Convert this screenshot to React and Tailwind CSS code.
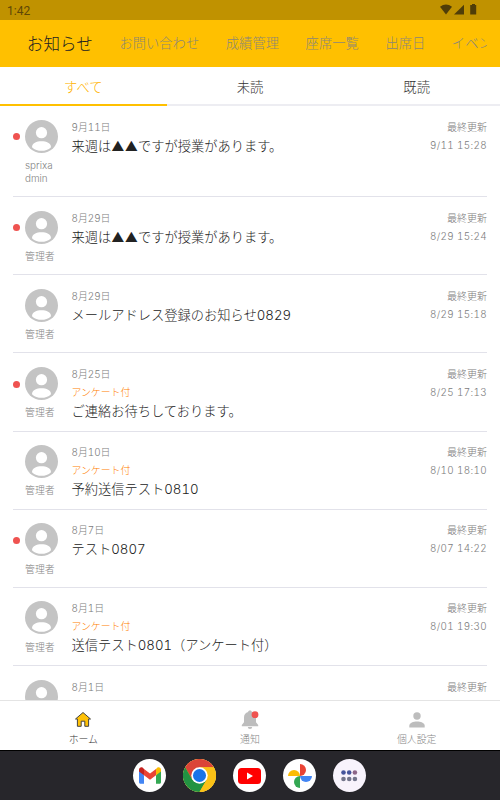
import clsx from 'clsx'

const categories = ['お問い合わせ', '成績管理', '座席一覧', '出席日', 'イベント']

const notices = [
  { id: 1, date: '9月11日', title: '来週は▲▲ですが授業があります。', name: 'sprixadmin', updated: '9/11 15:28', unread: true },
  { id: 2, date: '8月29日', title: '来週は▲▲ですが授業があります。', name: '管理者', updated: '8/29 15:24', unread: true },
  { id: 3, date: '8月29日', title: 'メールアドレス登録のお知らせ0829', name: '管理者', updated: '8/29 15:18' },
  { id: 4, date: '8月25日', title: 'ご連絡お待ちしております。', name: '管理者', updated: '8/25 17:13', unread: true, survey: true },
  { id: 5, date: '8月10日', title: '予約送信テスト0810', name: '管理者', updated: '8/10 18:10', survey: true },
  { id: 6, date: '8月7日', title: 'テスト0807', name: '管理者', updated: '8/07 14:22', unread: true },
  { id: 7, date: '8月1日', title: '送信テスト0801（アンケート付）', name: '管理者', updated: '8/01 19:30', survey: true },
  { id: 8, date: '8月1日', survey: true },
]

function Avatar() {
  return (
    <svg viewBox="0 0 33 33" className="block size-[33px]">
      <circle cx="16.5" cy="16.5" r="16.5" fill="#c4c4c4" />
      <circle cx="16.5" cy="12.7" r="5.6" fill="#fff" />
      <path d="M7 27.2c0-4.2 4.6-6 9.5-6s9.5 1.8 9.5 6c-2.6 2.6-6 3.6-9.5 3.6S9.6 29.8 7 27.2z" fill="#fff" />
    </svg>
  )
}

function Notice({ item }) {
  return (
    <li className="flex min-h-[78.15px] border-b border-[#e2e2ea] pt-[13.6px] pb-[11.5px]">
      <div className="flex w-3 shrink-0 pt-[13.5px]">
        {item.unread && <span className="size-[7px] rounded-full bg-[#ef5350]" />}
      </div>
      <div className="w-[33px] shrink-0">
        <Avatar />
        <div className="mt-[6.2px] w-[31px] text-[9.9px] leading-[12.8px] break-all text-[#858585]">{item.name}</div>
      </div>
      <div className="ml-[13.5px] min-w-0 flex-1">
        <div className="h-[17px] text-[9.9px] leading-[15px] text-[#7c7c7c]">{item.date}</div>
        {item.survey && <div className="h-[17.5px] text-[9.9px] leading-[17px] text-[#ff8000]">アンケート付</div>}
        <div className="h-[17px] text-[13.25px] leading-[19px] whitespace-nowrap text-[#222]">{item.title}</div>
      </div>
      <div className="text-right text-[9.9px] text-[#7c7c7c]">
        <div className="h-[17px] text-[10px] leading-[15px]">最終更新</div>
        <div className="h-[17px] leading-[16px] tracking-[0.035em]">{item.updated}</div>
      </div>
    </li>
  )
}

function StatusIcons() {
  return (
    <svg viewBox="0 0 40 12" className="h-3 w-10" fill="#4f3d08">
      <path d="M0 2.8Q6-1.6 12 2.8L6 10.6z" />
      <path d="M24 .8V10.6H14z" />
      <path d="M32 .9v-1h3v1h1.2V10.6H30.2V.9z" />
    </svg>
  )
}

function HomeIcon() {
  return (
    <svg viewBox="0 0 18 17" className="h-[17px] w-[18px]">
      <path d="M9 1.5L1.5 8h1.9v7.300h3.8v-5.1h3.6v5.1h3.8V8h1.9z" fill="#ffc107" stroke="#444" strokeWidth="1" strokeLinejoin="round" />
    </svg>
  )
}

function BellIcon() {
  return (
    <svg viewBox="0 0 18 20" className="h-5 w-[18px]" fill="#bdbdbd">
      <path d="M9 .6c-1.200 0-1.900.7-1.900 1.500C4.400 2.800 3 4.800 3 7.600v4.600L.8 14.900v1.300h16.400v-1.300L15 12.200V7.600c0-2.800-1.400-4.800-4.100-5.500C10.900 1.300 10.200.6 9 .6zM6.800 16.900a2.200 2 0 0 0 4.400 0z" />
      <circle cx="14" cy="4.7" r="3.4" fill="#ef5350" />
    </svg>
  )
}

function PersonIcon() {
  return (
    <svg viewBox="0 0 16 16" className="size-4" fill="#bdbdbd">
      <circle cx="8" cy="4" r="3.7" />
      <path d="M.3 15.500v-1.700C.3 11 4.500 9.600 8 9.600s7.700 1.400 7.700 4.200v1.700z" />
    </svg>
  )
}

function GmailIcon() {
  return (
    <svg viewBox="0 0 22 17" className="h-[17px] w-[22px]">
      <path d="M0 3v12.300c0 .9.700 1.500 1.500 1.500H5V8.300L2 4z" fill="#4285f4" />
      <path d="M22 3v12.300c0 .9-.7 1.500-1.500 1.500H17V8.300L20 4z" fill="#34a853" />
      <path d="M17 2v6.300l5-3.800V2.600c0-2-2.200-3.100-3.800-1.900z" fill="#fbbc04" />
      <path d="M5 8.300V2l6 4.500L17 2v6.300l-6 4.500z" fill="#ea4335" />
      <path d="M0 2.600v1.900l5 3.800V2L3.800.7C2.200-.5 0 .6 0 2.600z" fill="#c5221f" />
    </svg>
  )
}

function ChromeIcon() {
  return (
    <svg viewBox="0 0 48 48" className="size-[33px]">
      <circle cx="24" cy="24" r="24" fill="#fbc116" />
      <path d="M24 12h20.800A24 24 0 0 0 3.200 12L13.600 30z" fill="#db4437" />
      <path d="M3.200 12A24 24 0 0 0 24 48l10.400-18L24 34l-10.400-4z" fill="#229342" />
      <path d="M24 12h20.800A24 24 0 0 1 24 48l10.400-18z" fill="#fbc116" />
      <circle cx="24" cy="24" r="12" fill="#fff" />
      <circle cx="24" cy="24" r="9.5" fill="#1a73e8" />
    </svg>
  )
}

function YoutubeIcon() {
  return (
    <svg viewBox="0 0 23 16" className="h-4 w-[23px]">
      <rect width="23" height="16" rx="3.5" fill="#f00" />
      <path d="M9 4.5v7l6-3.5z" fill="#fff" />
    </svg>
  )
}

function PhotosIcon() {
  return (
    <svg viewBox="0 0 24 24" className="size-6">
      <path d="M12 0a6 6 0 0 1 0 12z" fill="#ea4335" />
      <path d="M24 12a6 6 0 0 1-12 0z" fill="#4285f4" />
      <path d="M12 24a6 6 0 0 1 0-12z" fill="#34a853" />
      <path d="M0 12a6 6 0 0 1 12 0z" fill="#fbbc04" />
    </svg>
  )
}

function AppsIcon() {
  return (
    <svg viewBox="0 0 17 12" className="h-3 w-[17px]">
      <circle cx="2.5" cy="2.5" r="2.3" fill="#45549b" />
      <circle cx="8.2" cy="2.5" r="2.3" fill="#45549b" />
      <circle cx="13.9" cy="2.5" r="2.3" fill="#8d6688" />
      <circle cx="2.5" cy="9" r="2.3" fill="#73758b" />
      <circle cx="8.2" cy="9" r="2.3" fill="#73758b" />
      <circle cx="13.9" cy="9" r="2.3" fill="#73758b" />
    </svg>
  )
}

const tabs = [
  { label: 'ホーム', Icon: HomeIcon, active: true },
  { label: '通知', Icon: BellIcon },
  { label: '個人設定', Icon: PersonIcon },
]

const dock = [GmailIcon, ChromeIcon, YoutubeIcon, PhotosIcon, AppsIcon]

export default function App() {
  return (
    <div lang="ja" className="flex h-[800px] w-[500px] flex-col overflow-hidden bg-white font-['Inter','Noto_Sans_CJK_JP',sans-serif] font-light tabular-nums">
      <div className="flex h-5 shrink-0 items-center justify-between bg-[#c09200] pr-5 pl-[7px]">
        <span className="pt-0.5 font-['Roboto',sans-serif] text-[12px] font-normal text-[#5e4706]">1:42</span>
        <StatusIcons />
      </div>

      <header className="h-[46.5px] shrink-0 bg-[#ffc000] px-[13px]">
        <nav className="flex h-full items-center gap-[26.6px] overflow-hidden pt-[2px] pl-[13.8px] text-[13.3px] whitespace-nowrap text-[#8c8778]">
          <span className="text-[16.6px] text-[#222]">お知らせ</span>
          {categories.map(c => (
            <span key={c}>{c}</span>
          ))}
        </nav>
      </header>

      <div className="grid h-[39.5px] shrink-0 grid-cols-3 text-center text-[13.3px] leading-[33px] text-[#333]">
        <div className="border-b-2 border-[#ffc000] pt-[4.5px] text-[#ffb300]">すべて</div>
        <div className="border-b-2 border-[#ededf2] pt-[4.5px]">未読</div>
        <div className="border-b-2 border-[#ededf2] pt-[4.5px]">既読</div>
      </div>

      <ul className="min-h-0 flex-1 overflow-hidden px-[13px] pt-[0.3px]">
        {notices.map(n => (
          <Notice key={n.id} item={n} />
        ))}
      </ul>

      <div className="grid h-[50px] shrink-0 grid-cols-3 border-t border-[#e4e4e4] bg-white text-[9.9px] text-[#858585]">
        {tabs.map(({ label, Icon, active }) => (
          <div key={label} className={clsx('flex flex-col items-center pt-2', active && 'text-[#333]')}>
            <div className="flex h-[21px] items-center">
              <Icon />
            </div>
            <span className="leading-[19px]">{label}</span>
          </div>
        ))}
      </div>

      <div className="flex h-[50px] shrink-0 items-center justify-center gap-[17px] border-t border-black bg-[#27262b] pr-px">
        {dock.map((Icon, i) => (
          <div key={i} className={clsx('flex size-[33px] items-center justify-center rounded-full', i === 4 ? 'bg-[#f8f3fc]' : 'bg-white')}>
            <Icon />
          </div>
        ))}
      </div>
    </div>
  )
}
